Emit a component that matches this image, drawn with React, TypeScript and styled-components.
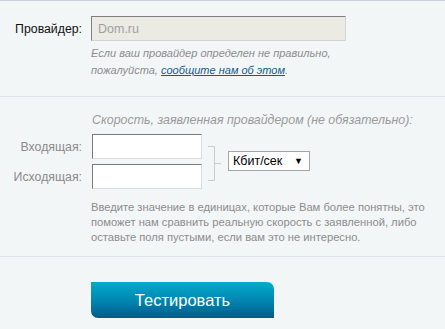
import React from "react";
import styled, { createGlobalStyle } from "styled-components";

const GlobalStyle = createGlobalStyle`
  html, body {
    margin: 0;
    padding: 0;
    background: #f3f6f7;
  }
  body {
    font-family: "Liberation Sans", Arial, sans-serif;
  }
`;

const Bracket = () => (
  <svg width="14" height="35" viewBox="0 0 14 35">
    <path d="M0 0.5 H6.5 V34.5 H0 M6.5 17.5 H13" fill="none" stroke="#c9cccd" />
  </svg>
);

const App = () => {
  return (
    <>
      <GlobalStyle />
      <Page>
        <Section $pad="15px 0 0" $height="80px">
          <Row>
            <Label $dark>Провайдер:</Label>
            <ProviderInput type="text" value="Dom.ru" readOnly />
          </Row>
          <Hint>
            Если ваш провайдер определен не правильно,
            <br />
            пожалуйста, <Link href="#">сообщите нам об этом</Link>.
          </Hint>
        </Section>
        <Section $pad="15px 0 0" $height="144px">
          <SpeedTitle>Скорость, заявленная провайдером (не обязательно):</SpeedTitle>
          <SpeedGrid>
            <Label>Входящая:</Label>
            <SpeedInput type="text" />
            <BracketCell>
              <Bracket />
            </BracketCell>
            <UnitCell>
              <UnitSelect>
                <span>Кбит/сек</span>
                <Arrow>▼</Arrow>
              </UnitSelect>
            </UnitCell>
            <Label>Исходящая:</Label>
            <SpeedInput type="text" />
          </SpeedGrid>
          <Note>
            Введите значение в единицах, которые Вам более понятны, это
            <br />
            поможет нам сравнить реальную скорость с заявленной, либо
            <br />
            оставьте поля пустыми, если вам это не интересно.
          </Note>
        </Section>
        <Footer>
          <TestButton type="button">Тестировать</TestButton>
        </Footer>
      </Page>
    </>
  );
};

const Page = styled.div`
  width: 445px;
  height: 329px;
  border-top: 1px solid #c7d3da;
  box-sizing: border-box;
  overflow: hidden;
`;

const Section = styled.div<{ $pad: string; $height: string }>`
  padding: ${({ $pad }) => $pad};
  height: ${({ $height }) => $height};
  border-bottom: 1px solid #dce6e8;
`;

const Row = styled.div`
  display: flex;
  align-items: center;
  gap: 9px;
`;

const Label = styled.div<{ $dark?: boolean }>`
  width: 82px;
  text-align: right;
  font-size: 12.3px;
  white-space: nowrap;
  color: ${({ $dark }) => ($dark ? "#111" : "#8a8a8a")};
`;

const ProviderInput = styled.input`
  width: 255px;
  height: 25px;
  box-sizing: border-box;
  margin: 0;
  padding: 0 0 0 6px;
  font-family: inherit;
  font-size: 12.5px;
  color: #a0a0a0;
  background: #ebeae3;
  border: 1px solid #d4d4d4;
  border-top-color: #808080;
  border-left-color: #808080;
  outline: none;
`;

const Hint = styled.div`
  margin: 4px 0 0 91px;
  font-size: 11px;
  line-height: 17px;
  font-style: italic;
  white-space: nowrap;
  color: #8c8c8c;
`;

const Link = styled.a`
  color: #125c8c;
  text-decoration: underline;
`;

const SpeedTitle = styled.div`
  margin-left: 92px;
  font-size: 12.4px;
  font-style: italic;
  line-height: 16px;
  white-space: nowrap;
  color: #9a9a9a;
`;

const SpeedGrid = styled.div`
  display: grid;
  grid-template-columns: 82px 110px 14px auto;
  grid-template-rows: 25px 25px;
  column-gap: 10px;
  row-gap: 5px;
  align-items: center;
  margin-top: 6px;

  & > ${Label} {
    width: auto;
  }
`;

const SpeedInput = styled.input`
  width: 110px;
  height: 25px;
  box-sizing: border-box;
  margin: 0;
  background: #fff;
  border: 1px solid #dcdcdc;
  border-top-color: #7a7a7a;
  border-left-color: #7a7a7a;
  outline: none;
`;

const BracketCell = styled.div`
  grid-column: 3;
  grid-row: 1 / span 2;
  display: flex;
  margin-left: -4px;
  margin-top: 3px;
`;

const UnitCell = styled.div`
  grid-column: 4;
  grid-row: 1 / span 2;
  margin-left: -8px;
  margin-top: -1px;
`;

const UnitSelect = styled.div`
  width: 82px;
  height: 20px;
  box-sizing: border-box;
  display: flex;
  align-items: center;
  justify-content: space-between;
  padding: 0 6px 0 4px;
  background: #fff;
  border: 1px solid #a5a5a5;
  font-size: 12.5px;
  color: #000;
`;

const Arrow = styled.span`
  font-size: 9px;
`;

const Note = styled.div`
  margin: 11px 0 0 91px;
  font-size: 11.2px;
  line-height: 15px;
  white-space: nowrap;
  color: #8c8c8c;
`;

const Footer = styled.div`
  padding: 25px 0 0 91px;
`;

const TestButton = styled.button`
  width: 183px;
  height: 36px;
  border: none;
  margin: 0;
  padding: 0;
  border-radius: 0 7px 0 7px;
  background: linear-gradient(to bottom, #02acca 0%, #0087b2 50%, #005c8a 100%);
  color: #fff;
  font-family: inherit;
  font-size: 16.5px;
  cursor: pointer;
`;

export default App;
